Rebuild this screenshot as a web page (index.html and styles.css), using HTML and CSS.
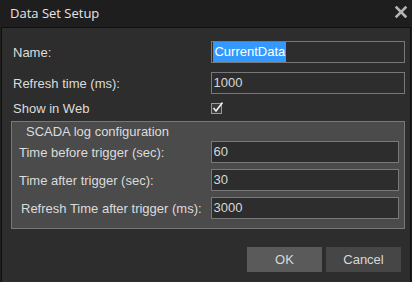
FILE: index.html
```html
<!DOCTYPE html>
<html lang="en">
<head>
    <meta charset="UTF-8">
    <title>Data Set Setup</title>
    <link rel="stylesheet" href="styles.css">
</head>
<body>
    <div class="dialog">
        <div class="titlebar">
            <span class="title">Data Set Setup</span>
            <svg class="close" width="12" height="12" viewBox="0 0 12 12">
                <path d="M1.5 1.5 L10.5 10.5 M10.5 1.5 L1.5 10.5" stroke="#b4b4b4" stroke-width="2.6" stroke-linecap="square"/>
            </svg>
        </div>

        <div class="panel">
            <div class="row">
                <label>Name:</label>
                <div class="field"><span class="selected">CurrentData</span></div>
            </div>
            <div class="row">
                <label>Refresh time (ms):</label>
                <div class="field">1000</div>
            </div>
            <div class="row short">
                <label>Show in Web</label>
                <span class="check">
                    <svg width="12" height="12" viewBox="0 0 12 12">
                        <rect x="0.5" y="1.5" width="10" height="10" fill="#3a3a3a" stroke="#9a9a9a"/>
                        <path d="M2.5 6 L5 9 L11.5 0.5" fill="none" stroke="#f2f2f2" stroke-width="1.6"/>
                    </svg>
                </span>
            </div>

            <div class="group">
                <div class="group-title">SCADA log configuration</div>
                <div class="row">
                    <label>Time before trigger (sec):</label>
                    <div class="field">60</div>
                </div>
                <div class="row">
                    <label>Time after trigger (sec):</label>
                    <div class="field">30</div>
                </div>
                <div class="row">
                    <label class="indent">Refresh Time after trigger (ms):</label>
                    <div class="field">3000</div>
                </div>
            </div>

            <div class="buttons">
                <button class="ok">OK</button>
                <button>Cancel</button>
            </div>
        </div>
    </div>
</body>
</html>
```

FILE: styles.css
```css
body {
    margin: 0;
    background-color: #1e1e1e;
    font-family: "Liberation Sans", Arial, sans-serif;
    font-size: 13px;
    color: #dcdcdc;
}
.dialog {
    width: 412px;
    height: 282px;
    display: flex;
    flex-direction: column;
}
.titlebar {
    height: 27px;
    display: flex;
    align-items: center;
    justify-content: space-between;
    padding: 0 5px 0 10px;
    flex-shrink: 0;
}
.title {
    font-family: "Open Sans", sans-serif;
    font-size: 13px;
    color: #e6e6e6;
    margin-top: -2px;
}
.close {
    margin-top: -3px;
}
.panel {
    flex: 1;
    margin: 0 1px;
    border: 1px solid #101010;
    border-bottom: none;
    background-color: #2d2d2d;
    padding: 13px 5px 0 9px;
}
.row {
    display: flex;
    align-items: center;
    height: 22px;
    margin-bottom: 9px;
}
.row.short {
    height: 14px;
    margin-top: -2px;
    margin-bottom: 6px;
}
.row label {
    width: 199px;
    padding-left: 2px;
}
.field {
    width: 191px;
    height: 20px;
    border: 1px solid #787878;
    background-color: #2d2d2d;
    color: #d8d8d8;
    line-height: 20px;
    padding-left: 1px;
    box-sizing: content-box;
}
.selected {
    background-color: #3399ff;
    color: #ffffff;
    padding: 2px 0 3px 1px;
    border-right: 1px solid #e07020;
}
.check {
    display: flex;
    margin-left: -1px;
}
.group {
    width: 394px;
    height: 108px;
    border: 1px solid #787878;
    background-color: #4b4b4b;
    padding: 2px 5px 0 7px;
    box-sizing: border-box;
    margin-top: 2px;
}
.group-title {
    padding-left: 7px;
    height: 16px;
    margin-bottom: 1px;
}
.group .row {
    margin-bottom: 6px;
}
.group .row label {
    width: 193px;
    padding-left: 0;
}
.group .row label.indent {
    padding-left: 2px;
    width: 191px;
}
.group .field {
    width: 185px;
}
.buttons {
    display: flex;
    justify-content: flex-end;
    gap: 4px;
    margin-top: 18px;
    padding-right: 4px;
}
button {
    width: 75px;
    height: 25px;
    border: none;
    background-color: #464646;
    color: #d8d8d8;
    font-family: "Liberation Sans", Arial, sans-serif;
    font-size: 13px;
}
button.ok {
    background-color: #5a5a5a;
}
```
